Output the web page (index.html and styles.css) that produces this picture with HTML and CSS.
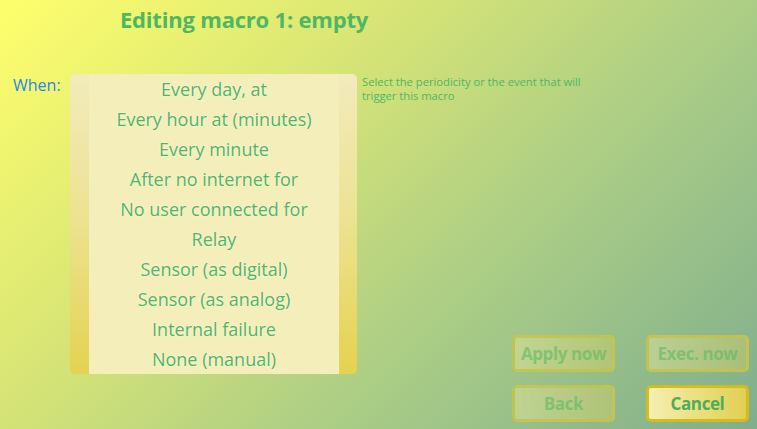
FILE: index.html
```html
<!DOCTYPE html>
<html>
<head>
<meta charset="utf-8">
<link rel="stylesheet" href="styles.css">
</head>
<body>
<div class="page">
  <h1 class="title">Editing macro 1: empty</h1>
  <div class="main">
    <div class="label">When:</div>
    <div class="listbox">
      <ul class="items">
        <li>Every day, at</li>
        <li>Every hour at (minutes)</li>
        <li>Every minute</li>
        <li>After no internet for</li>
        <li>No user connected for</li>
        <li>Relay</li>
        <li>Sensor (as digital)</li>
        <li>Sensor (as analog)</li>
        <li>Internal failure</li>
        <li>None (manual)</li>
      </ul>
    </div>
    <div class="side">
      <p class="help">Select the periodicity or the event that will trigger this macro</p>
      <div class="buttons">
        <button class="btn disabled">Apply now</button>
        <button class="btn disabled">Exec. now</button>
        <button class="btn disabled">Back</button>
        <button class="btn primary">Cancel</button>
      </div>
    </div>
  </div>
</div>
</body>
</html>
```

FILE: styles.css
```css
html, body {
  margin: 0;
  padding: 0;
}
body {
  width: 757px;
  height: 429px;
  overflow: hidden;
  font-family: "Open Sans", "Noto Sans", sans-serif;
}
.page {
  width: 757px;
  height: 429px;
  box-sizing: border-box;
  background: linear-gradient(135deg, #ffff6c 0%, #d6e476 35%, #a9cc86 65%, #80ae8e 100%);
  display: flex;
  flex-direction: column;
}
.title {
  margin: 4px 0 0 120px;
  font-size: 22px;
  font-weight: 700;
  color: #4db764;
  line-height: 30px;
  letter-spacing: -0.2px;
}
.main {
  flex: 1;
  display: grid;
  grid-template-columns: 70px 287px 1fr;
  margin-top: 40px;
  padding-bottom: 7px;
}
.label {
  padding: 0 0 0 13px;
  font-size: 16px;
  color: #2a86ea;
  line-height: 22px;
}
.listbox {
  align-self: start;
  height: 300px;
  border-radius: 5px;
  background: linear-gradient(180deg, #f2ebbc 0%, #ece28f 50%, #e4d250 100%);
  padding: 0 18px 0 19px;
  overflow: hidden;
}
.items {
  list-style: none;
  margin: 0;
  padding: 0;
  height: 100%;
  background: #f4eebb;
}
.items li {
  height: 30px;
  line-height: 30px;
  text-align: center;
  font-size: 18px;
  color: #52b467;
  text-shadow: 0 0 2px #fffbe0;
  white-space: nowrap;
}
.side {
  display: flex;
  flex-direction: column;
  padding-left: 5px;
}
.help {
  margin: 1px 0 0 0;
  width: 250px;
  font-size: 11.2px;
  line-height: 14px;
  color: #4db764;
}
.buttons {
  margin-top: auto;
  margin-left: 150px;
  display: grid;
  grid-template-columns: 103px 103px;
  column-gap: 31px;
  row-gap: 13px;
}
.btn {
  height: 37px;
  box-sizing: border-box;
  border-radius: 5px;
  font-family: "Open Sans", "Noto Sans", sans-serif;
  font-size: 17px;
  font-weight: 700;
  padding: 0;
  letter-spacing: -0.4px;
}
.btn.disabled {
  border: 3px solid rgba(196, 194, 70, 0.8);
  background: linear-gradient(90deg, rgba(236, 232, 160, 0.45), rgba(220, 208, 90, 0.4));
  color: rgba(90, 185, 100, 0.6);
}
.btn.primary {
  border: 3px solid #d4bb1e;
  background: linear-gradient(90deg, #f5efb0, #e2cf52);
  color: #4cae5c;
}
```
